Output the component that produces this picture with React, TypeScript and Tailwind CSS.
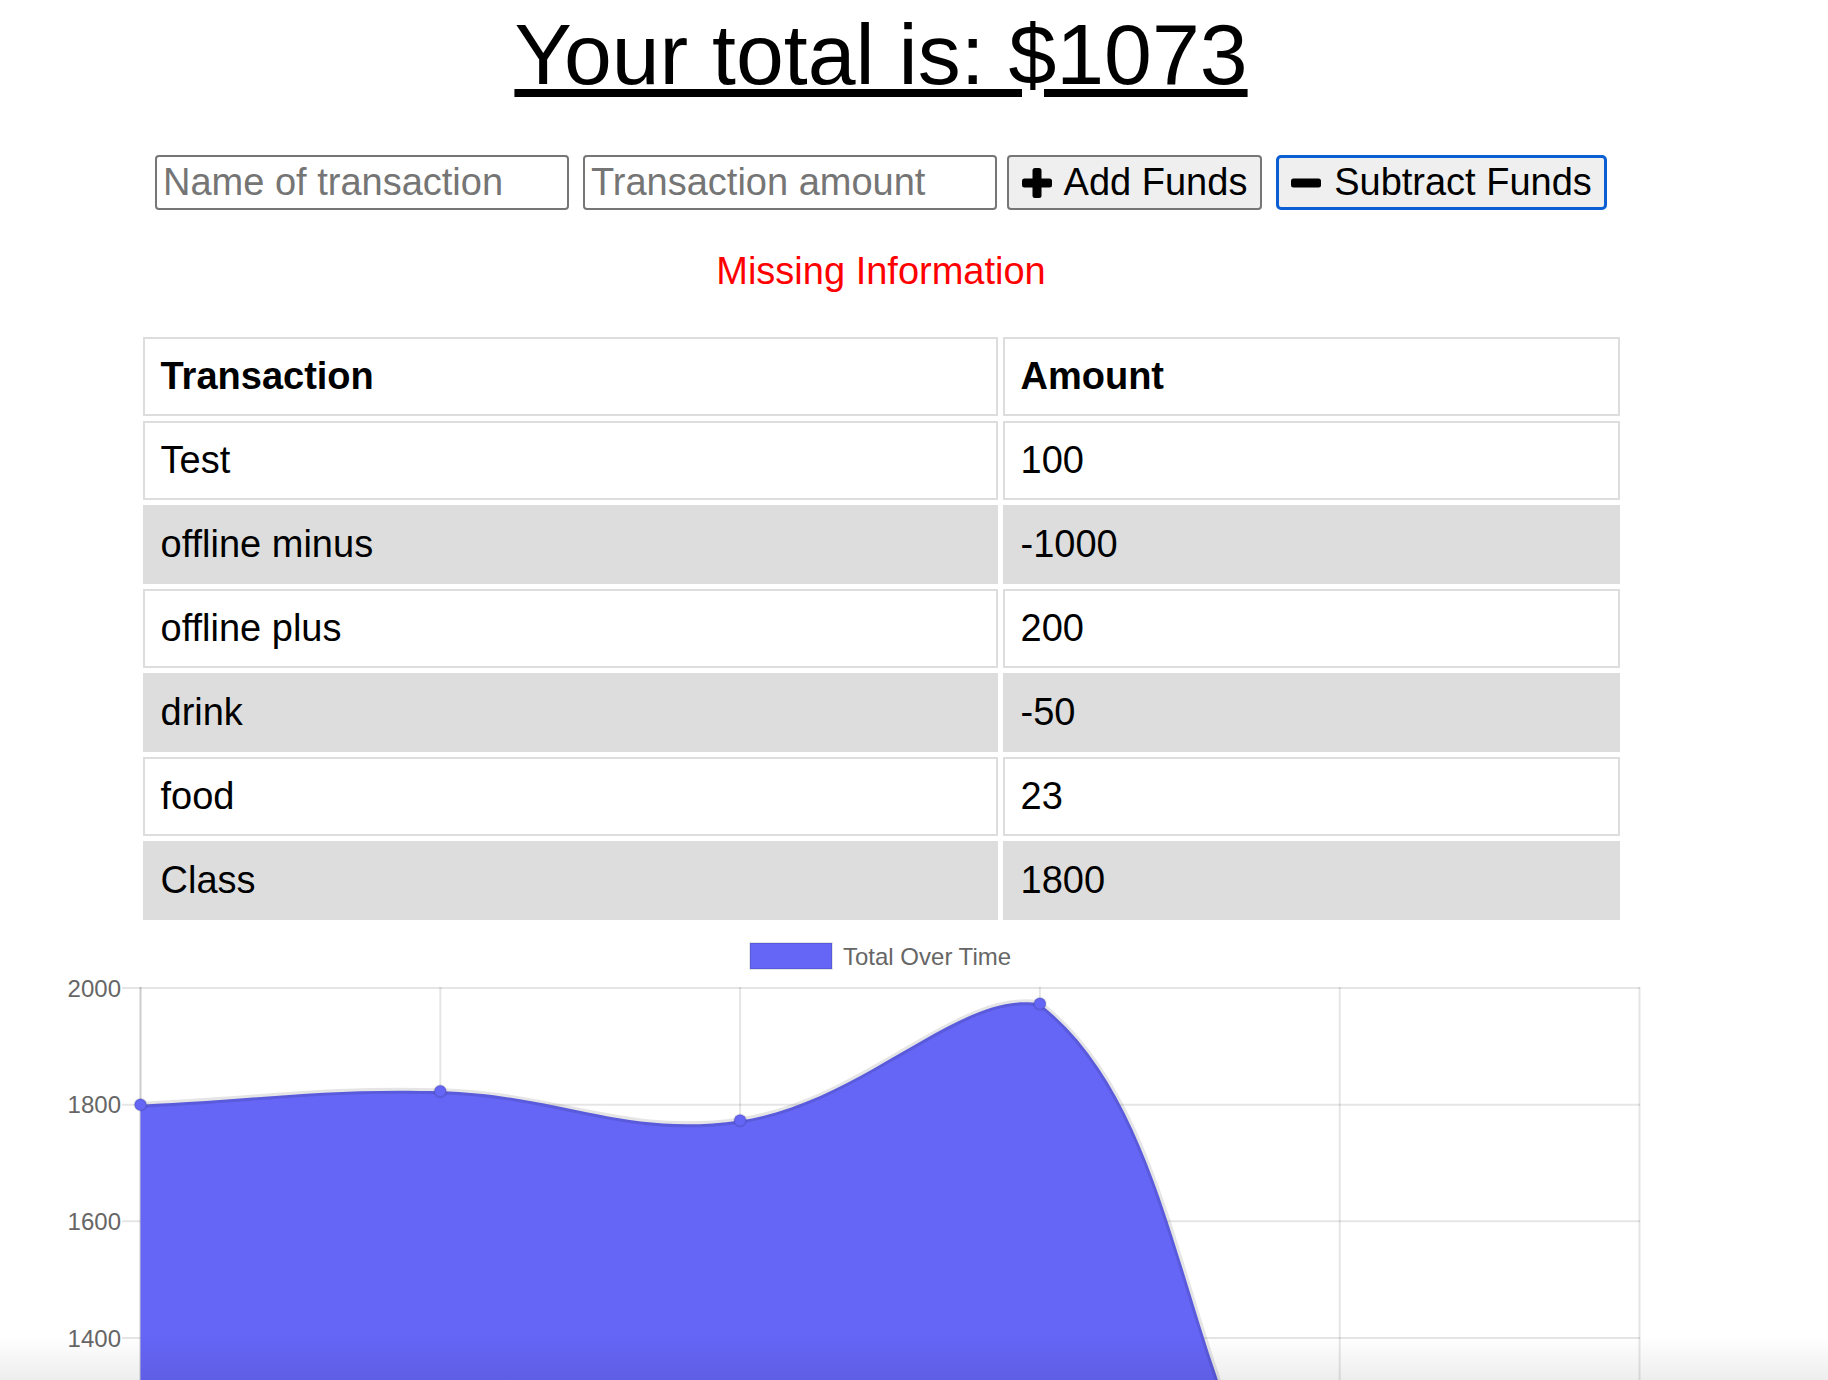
import React from 'react';

const rows = [
  { name: 'Test', amount: '100' },
  { name: 'offline minus', amount: '-1000' },
  { name: 'offline plus', amount: '200' },
  { name: 'drink', amount: '-50' },
  { name: 'food', amount: '23' },
  { name: 'Class', amount: '1800' },
];

// running totals, oldest first
const totals = [1800, 1823, 1773, 1973, 973, 1073];

const LEFT = 140.5;
const STEP = 299.8;
const TOP = 988;
const PX_PER_UNIT = 116.67 / 200;

const toY = (v: number) => TOP + (2000 - v) * PX_PER_UNIT;

type Pt = { x: number; y: number };

// same spline as chart.js (tension 0.4), control points capped at the top of the plot
function curvePath(pts: Pt[], tension = 0.4) {
  const ctrl = pts.map((p, i) => {
    const prev = pts[Math.max(i - 1, 0)];
    const next = pts[Math.min(i + 1, pts.length - 1)];
    const d01 = Math.hypot(p.x - prev.x, p.y - prev.y);
    const d12 = Math.hypot(next.x - p.x, next.y - p.y);
    const s01 = d01 / (d01 + d12 || 1);
    const s12 = d12 / (d01 + d12 || 1);
    const fa = tension * s01;
    const fb = tension * s12;
    const cap = (y: number) => Math.max(y, TOP);
    return {
      prev: { x: p.x - fa * (next.x - prev.x), y: cap(p.y - fa * (next.y - prev.y)) },
      next: { x: p.x + fb * (next.x - prev.x), y: cap(p.y + fb * (next.y - prev.y)) },
    };
  });
  let d = `M ${pts[0].x} ${pts[0].y}`;
  for (let i = 1; i < pts.length; i++) {
    const a = ctrl[i - 1].next;
    const b = ctrl[i].prev;
    d += ` C ${a.x} ${a.y} ${b.x} ${b.y} ${pts[i].x} ${pts[i].y}`;
  }
  return d;
}

function PlusIcon() {
  return (
    <svg width="30" height="30" viewBox="0 0 30 30" className="shrink-0">
      <rect x="10.5" y="0" width="9" height="30" rx="2.5" fill="#000" />
      <rect x="0" y="10.5" width="30" height="9" rx="2.5" fill="#000" />
    </svg>
  );
}

function MinusIcon() {
  return (
    <svg width="30" height="30" viewBox="0 0 30 30" className="shrink-0">
      <rect x="0" y="10.5" width="30" height="9" rx="2.5" fill="#000" />
    </svg>
  );
}

function Chart() {
  const pts = totals.map((v, i) => ({ x: LEFT + i * STEP, y: toY(v) }));
  const line = curvePath(pts);
  const area = `${line} L ${pts[pts.length - 1].x} 2200 L ${pts[0].x} 2200 Z`;
  const yTicks = [2000, 1800, 1600, 1400];

  return (
    <svg width="1762" height="455" viewBox="0 925 1762 455" className="block">
      {/* legend */}
      <rect x="750" y="943" width="82" height="26" fill="#6565f6" stroke="rgba(0,0,0,0.1)" strokeWidth="2" />
      <text x="843" y="965" fontSize="24" fill="#666" fontFamily="'Liberation Sans', Arial, sans-serif">
        Total Over Time
      </text>

      {/* grid */}
      {yTicks.map((t) => (
        <g key={t}>
          <line x1="122" x2="1640" y1={toY(t)} y2={toY(t)} stroke="rgba(0,0,0,0.1)" strokeWidth="2" />
          <text
            x="121"
            y={toY(t) + 8.6}
            fontSize="24"
            fill="#666"
            textAnchor="end"
            fontFamily="'Liberation Sans', Arial, sans-serif"
          >
            {t}
          </text>
        </g>
      ))}
      {totals.map((_, i) => (
        <line
          key={i}
          x1={LEFT + i * STEP}
          x2={LEFT + i * STEP}
          y1={TOP - 1}
          y2="1400"
          stroke={i === 0 ? 'rgba(0,0,0,0.2)' : 'rgba(0,0,0,0.1)'}
          strokeWidth="2"
        />
      ))}

      {/* data */}
      <path d={area} fill="#6565f6" />
      <path d={line} fill="none" stroke="rgba(0,0,0,0.1)" strokeWidth="6" />
      {pts.map((p, i) => (
        <circle key={i} cx={p.x} cy={p.y} r="6" fill="#6565f6" stroke="rgba(0,0,0,0.1)" strokeWidth="2" />
      ))}
    </svg>
  );
}

export default function App() {
  return (
    <div className="relative h-[1380px] overflow-hidden bg-white font-['Liberation_Sans',Arial,sans-serif] text-black">
      <div className="flex w-[1762px] flex-col items-center">
        <h1 className="mt-[11px] text-[86px] leading-[86px] font-normal underline decoration-auto underline-offset-auto">
          Your total is: $1073
        </h1>

        <div className="mt-[58px] flex h-[55px] items-stretch">
          <input
            type="text"
            placeholder="Name of transaction"
            className="w-[414px] rounded-[4px] border-2 border-[#767676] bg-white px-[6px] text-[38px] placeholder:text-[#757575]"
          />
          <input
            type="number"
            placeholder="Transaction amount"
            className="ml-[14px] w-[414px] rounded-[4px] border-2 border-[#767676] bg-white px-[6px] text-[38px] placeholder:text-[#757575]"
          />
          <button className="ml-[10px] flex w-[255px] items-center justify-center gap-[12px] rounded-[4px] border-2 border-[#767676] bg-[#efefef] text-[38px]">
            <PlusIcon />
            <span>Add Funds</span>
          </button>
          <button className="ml-[14px] flex w-[331px] items-center justify-center gap-[13px] rounded-[5px] border-[3px] border-[#0b5fd2] bg-[#efefef] text-[38px]">
            <MinusIcon />
            <span>Subtract Funds</span>
          </button>
        </div>

        <p className="mt-[42px] text-[38px] leading-[38px] text-[#ff0000]">Missing Information</p>

        <table className="mt-[42px] w-[1487px] table-fixed border-separate border-spacing-[5px] text-[38px]">
          <thead>
            <tr>
              <th className="h-[79px] w-[855px] border-2 border-[#dddddd] bg-white pl-[16px] text-left font-bold">
                Transaction
              </th>
              <th className="h-[79px] w-[617px] border-2 border-[#dddddd] bg-white pl-[16px] text-left font-bold">
                Amount
              </th>
            </tr>
          </thead>
          <tbody>
            {rows.map((r, i) => (
              <tr key={r.name}>
                <td
                  className={`h-[79px] border-2 border-[#dddddd] pl-[16px] ${i % 2 === 1 ? 'bg-[#dddddd]' : 'bg-white'}`}
                >
                  {r.name}
                </td>
                <td
                  className={`h-[79px] border-2 border-[#dddddd] pl-[16px] ${i % 2 === 1 ? 'bg-[#dddddd]' : 'bg-white'}`}
                >
                  {r.amount}
                </td>
              </tr>
            ))}
          </tbody>
        </table>

        <Chart />
      </div>

      <div className="pointer-events-none absolute inset-x-0 bottom-0 h-[44px] bg-linear-to-b from-transparent to-black/[0.07]" />
    </div>
  );
}
